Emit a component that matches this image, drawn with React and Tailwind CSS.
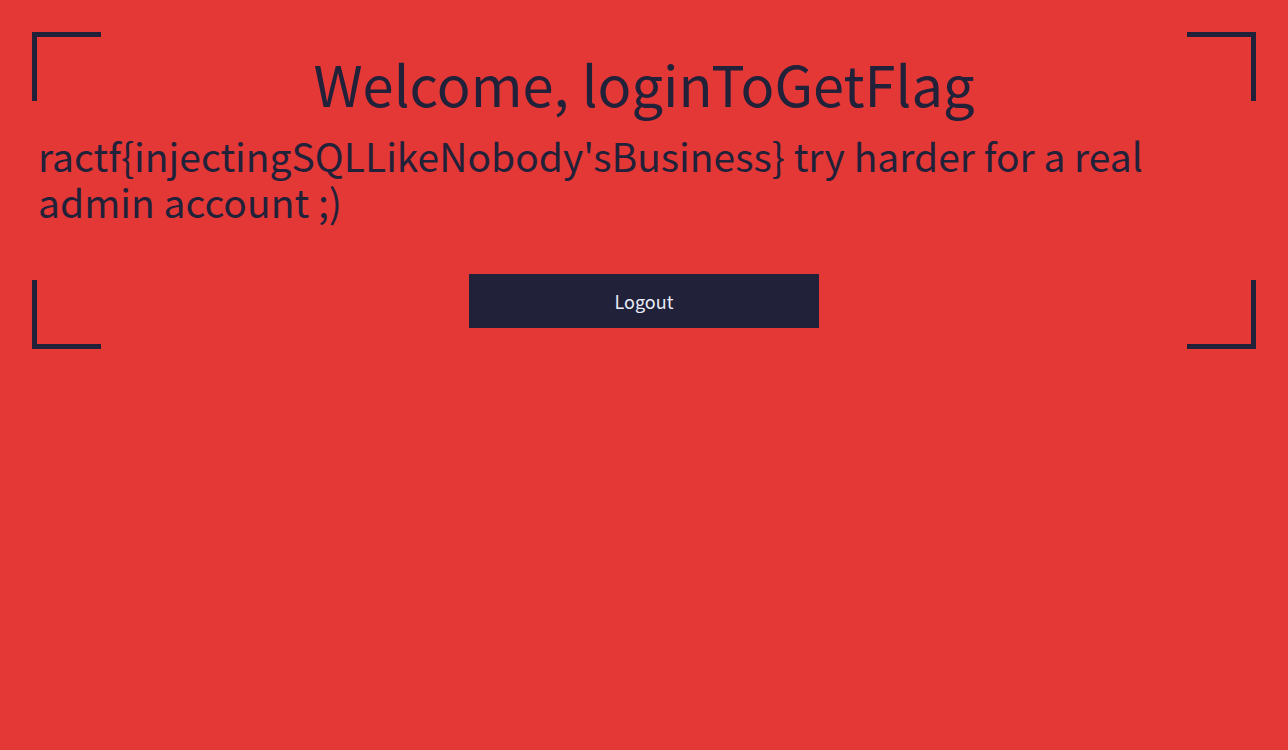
export default function App() {
  return (
    <div className="min-h-[750px] bg-[#e43836] p-8">
      <div className="relative flex h-[317px] flex-col font-['Noto_Sans_CJK_KR',sans-serif] text-[#22213a]">
        {/* corner brackets */}
        <span className="absolute left-0 top-0 h-[69px] w-[69px] border-l-[5px] border-t-[5px] border-[#22213a]" />
        <span className="absolute right-0 top-0 h-[69px] w-[69px] border-r-[5px] border-t-[5px] border-[#22213a]" />
        <span className="absolute bottom-0 left-0 h-[69px] w-[69px] border-b-[5px] border-l-[5px] border-[#22213a]" />
        <span className="absolute bottom-0 right-0 h-[69px] w-[69px] border-b-[5px] border-r-[5px] border-[#22213a]" />

        <h1 className="mt-[15px] text-center text-[56px] leading-[72px]">Welcome, loginToGetFlag</h1>
        <p className="mt-[13px] px-[6px] text-[39px] leading-[46px]">
          ractf{"{"}injectingSQLLikeNobody'sBusiness{"}"} try harder for a real admin account ;)
        </p>
        <div className="mt-[50px] flex justify-center">
          <button className="h-[54px] w-[350px] bg-[#22213a] text-[18px] text-[#e8ecf8]">Logout</button>
        </div>
      </div>
    </div>
  );
}
